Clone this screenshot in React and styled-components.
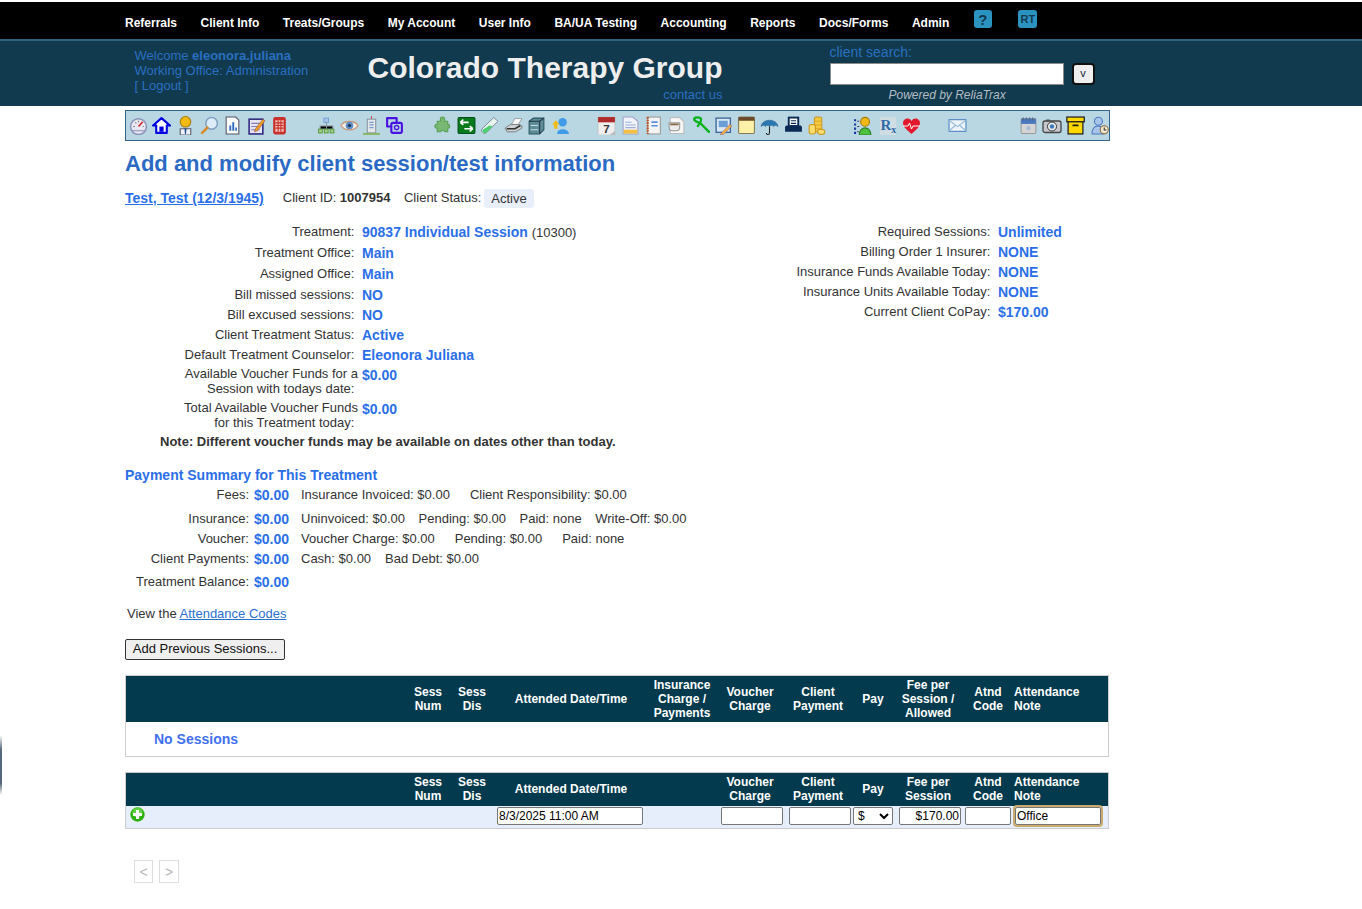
import React from "react";
import styled, { createGlobalStyle } from "styled-components";

const Global = createGlobalStyle`
  html, body { margin: 0; padding: 0; background: #fff; }
  body { font-family: "Liberation Sans", Arial, sans-serif; font-size: 13px; color: #333; }
`;
const Page = styled.div`position: relative; width: 1362px; height: 909px; overflow: hidden; padding-top: 2px; box-sizing: border-box;`;
const EdgeSmudge = styled.div`position: absolute; left: 0; top: 735px; width: 2px; height: 60px; background: linear-gradient(#fff, #56687c 25%, #56687c 80%, #fff);`;

const Nav = styled.nav`height: 37px; background: #000; display: flex; align-items: center; padding-left: 125px; gap: 23.55px; box-sizing: border-box;`;
const NavItem = styled.a`color: #fff; font-weight: 700; font-size: 12px; margin-top: 4px;`;
const HelpBadge = styled.span`
  display: inline-flex; align-items: center; justify-content: center; width: ${p => p.$w}px; height: 18px;
  margin-left: ${p => p.$ml}px; margin-top: -3px; background: #2b93c0; border-radius: 3px; color: #123a4e; font-weight: 700; font-size: ${p => p.$fs}px;
`;

const Header = styled.header`height: 67px; background: #113a4e; border-top: 2px solid #30617f; box-sizing: border-box; display: flex; position: relative;`;
const Welcome = styled.div`margin: 7px 0 0 134.5px; width: 233px; color: #2a6fc0; font-size: 13px; line-height: 15px; b{font-weight:700;}`;
const TitleCol = styled.div`width: 355px; display: flex; flex-direction: column;`;
const Title = styled.h1`margin: 7px 0 0; font-size: 30px; line-height: 40px; color: #eee; font-weight: 700; white-space: nowrap;`;
const Contact = styled.div`margin-top: -1px; text-align: right; color: #2a6fc0; font-size: 13px; line-height: 16px;`;
const SearchCol = styled.div`margin-left: 107px; width: 280px;`;
const SearchLabel = styled.div`color: #2a6fc0; font-size: 14px; line-height: 16px; margin-top: 3px;`;
const SearchRow = styled.div`display: flex; align-items: center; margin-top: 3px;`;
const SearchInput = styled.input`width: 234px; height: 22px; box-sizing: border-box; border: 1px solid #8a8a8a; background: #fff; padding: 0;`;
const SearchBtn = styled.button`
  width: 23px; height: 22px; margin-left: 8px; box-sizing: border-box; padding: 0 0 3px; background: #efefef; border: 2px solid #111; border-radius: 4px;
  font: 11px "Liberation Sans", Arial, sans-serif; color: #123;
`;
const Powered = styled.div`color: #b4bcc2; font-style: italic; font-size: 12px; line-height: 14px; margin: 3px 0 0 59px;`;

const Toolbar = styled.div`
  margin: 4px 0 0 125px; padding-left: .5px; width: 985px; height: 31px; box-sizing: border-box; background: #b9d7e3; border: 1px solid #33658a; display: flex; align-items: center;
`;
const ToolGroup = styled.div`display: flex; margin-left: ${p => p.$ml}px;`;
const ToolSlot = styled.span`width: ${p => p.$w || 23.6}px; height: 20px; display: flex; justify-content: center; align-items: center; svg{display:block;}`;

const Main = styled.main`margin-left: 125px; width: 985px;`;
const Heading = styled.h2`margin: 9px 0 0; color: #2a6ac4; font-size: 22px; line-height: 28px; font-weight: 700;`;
const ClientRow = styled.div`display: flex; align-items: center; margin-top: 10px; height: 20px; line-height: 20px;`;
const ClientLink = styled.a`color: #2a6fe8; font-weight: 700; font-size: 14px; text-decoration: underline; margin-right: 19px;`;
const ClientMeta = styled.span`margin-right: 13.5px; b{font-weight:700;}`;
const Chip = styled.span`background: #e8eefa; border-radius: 3px; padding: 0 7px; margin-left: -10.5px; height: 19px; line-height: 19px;`;

const Details = styled.div`display: flex; margin-top: 14px; position: relative;`;
const LeftDetails = styled.div`width: 620px;`;
const RightDetails = styled.div`width: 365px;`;
const DetailRow = styled.div`display: grid; grid-template-columns: ${p => p.$label}px 1fr; column-gap: 4px; height: ${p => p.$h}px; line-height: 20px;`;
const Label = styled.div`text-align: right; white-space: nowrap; ${p => p.$wrap && "line-height: 14.5px; padding-top: 2px;"}`;
const Value = styled.span`color: #2a6fe8; font-weight: 700; font-size: 14px; white-space: nowrap;`;
const PlainTail = styled.span`color: #333; font-weight: 400; font-size: 13px;`;
const Note = styled.div`font-weight: 700; margin: -1px 0 0 35px; line-height: 20px;`;

const SummaryTitle = styled.div`margin-top: 14px; color: #2a6fe8; font-weight: 700; font-size: 14px; line-height: 19px;`;
const SumRow = styled.div`display: flex; height: ${p => p.$h}px; line-height: 20px;`;
const SumLabel = styled.div`width: 124px; text-align: right; flex: none; white-space: nowrap;`;
const SumValue = styled(Value)`width: 47px; margin-left: 5px; flex: none;`;
const SumParts = styled.div`display: flex; gap: ${p => p.$gap}px; white-space: nowrap;`;

const ViewLine = styled.div`margin: 12px 0 0 2px; line-height: 20px; a{color:#2a6fd0; text-decoration: underline;}`;
const AddBtn = styled.button`
  display: block; margin-top: 15px; width: 160px; height: 21px; padding: 0 0 2px; background: #efefef; border: 1px solid #333; border-radius: 2px;
  font: 13px "Liberation Sans", Arial, sans-serif; color: #111;
`;

const Cols = "280px 44px 44px 154px 68px 68px 68px 42px 68px 52px 94px";
const Table = styled.section`width: 984px; box-sizing: border-box; border: 1px solid #ccc; margin-top: ${p => p.$mt}px;`;
const HeadRow = styled.div`display: grid; grid-template-columns: ${Cols}; height: ${p => p.$h}px; padding-bottom: ${p => p.$pb || 0}px; box-sizing: border-box; background: #033a4d; align-items: center;`;
const HeadCell = styled.div`color: #fff; font-weight: 700; font-size: 12px; line-height: 14px; text-align: ${p => p.$left ? "left" : "center"}; white-space: nowrap;`;
const Empty = styled.div`padding-left: 28px; color: #3f70f0; font-weight: 700; font-size: 14px; height: 34px; line-height: 34px;`;
const FormRow = styled.div`display: grid; grid-template-columns: ${Cols}; height: 22px; background: #e6eefb; align-items: start;`;
const Cell = styled.div`padding-top: 1px; display: flex;`;
const Field = styled.input`
  box-sizing: border-box; width: ${p => p.$w}px; height: 18px; margin-left: ${p => p.$ml}px; padding: 0 1px; border: 1px solid #767676; border-radius: 2px; background: #fff;
  font: 12px "Liberation Sans", Arial, sans-serif; color: #000; text-align: ${p => p.$right ? "right" : "left"};
  outline: ${p => p.$focus ? "2px solid #c9ab6c" : "none"};
`;
const PaySelect = styled.select`
  box-sizing: border-box; width: 40px; height: 18px; margin-left: 1px; padding: 0; border: 1px solid #767676; border-radius: 2px; background: #fff; font: 12px "Liberation Sans", Arial, sans-serif; color: #000;
`;
const AddIcon = styled.span`display: block; margin: 0 0 0 4px; width: 15px; height: 15px;`;
const Pager = styled.div`display: flex; gap: 6px; margin: 31px 0 0 9px;`;
const PageBtn = styled.span`width: ${p => p.$w}px; height: 23px; box-sizing: border-box; border: 1px solid #ddd; color: #b5b5b5; display:flex; align-items:center; justify-content:center; font-size: 14px;`;

const I = ({ children, w = 19, h = 19, vb = "0 0 18 18" }) => <svg width={w} height={h} viewBox={vb}>{children}</svg>;

const icons = {
  gauge: <I><circle cx="9" cy="10" r="7.500" fill="#e8e8f2" stroke="#8a90b8" strokeWidth="1.400"/><path d="M9 10 13 5.500" stroke="#d03030" strokeWidth="1.600"/><path d="M4 10h1.500M13 10h1M6 6l1 1M9 4.500v1.400" stroke="#777" /><path d="M3 14h12" stroke="#8a90b8"/></I>,
  home: <I><path d="M1 9 9 2l8 7h-3v7H4V9Z" fill="#fff" stroke="#0000e0" strokeWidth="2" strokeLinejoin="round"/><rect x="7" y="10" width="4" height="5" fill="#0000e0"/></I>,
  person: <I><path d="M4 18v-6h10v6Z" fill="#eef2f8" stroke="#556"/><path d="M8 11.500h2L9.500 17h-1Z" fill="#25508c"/><circle cx="9" cy="5.500" r="5" fill="#f3bb12" stroke="#a87908"/></I>,
  search: <I><circle cx="11" cy="7" r="5.500" fill="#dcecf8" stroke="#7f9fc0" strokeWidth="1.400"/><path d="M7 11 2 16" stroke="#d88a2c" strokeWidth="2.600" strokeLinecap="round"/></I>,
  report: <I><path d="M3 1h9l3 3v13H3Z" fill="#fbfbfb" stroke="#556"/><path d="M6 14V9h1.800v5ZM8.800 14V6h1.800v8ZM11.600 14v-3h1.600v3Z" fill="#2f6fc0"/></I>,
  notepad: <I><rect x="2" y="3" width="13" height="14" fill="#e8e4f4" stroke="#302a80" strokeWidth="1.500"/><path d="M4 7h8M4 10h8M4 13h8" stroke="#8480b0"/><path d="M8 12 15 3l2 1.500L10 14l-3 1Z" fill="#f0a020" stroke="#844" strokeWidth=".5"/></I>,
  phone: <I><rect x="3" y="1" width="12" height="16.500" rx="2" fill="#c8302c"/><rect x="5" y="4" width="8" height="11" fill="#f0b8b0"/><path d="M5 6.500h8M5 9h8M5 11.500h8M7.700 4v11M10.300 4v11" stroke="#c8302c"/></I>,
  org: <I><rect x="6.500" y="2" width="4.500" height="4" fill="#a8c6ea" stroke="#6a98d0" strokeWidth=".8"/><path d="M9 6v3M3 12V9.500h12V12M9 9v3" stroke="#8a94a0"/><rect x="1.500" y="12.500" width="3.500" height="3.500" fill="#a8d088" stroke="#5a9c40"/><rect x="7" y="12.500" width="3.500" height="3.500" fill="#a8d088" stroke="#5a9c40"/><rect x="12.500" y="12.500" width="3.500" height="3.500" fill="#a8d088" stroke="#5a9c40"/></I>,
  eye: <I><path d="M1 9c3-5 13-5 16 0-3 5.500-13 5.500-16 0Z" fill="#f2f0ec" stroke="#c89878" strokeWidth="1.300"/><circle cx="9" cy="9" r="3.600" fill="#5a8cc8"/><circle cx="9" cy="9" r="1.500" fill="#1e3050"/></I>,
  building: <I><path d="M9 0v3" stroke="#d04040"/><rect x="5" y="3" width="8" height="13" fill="#e4e8ec" stroke="#8a92a0"/><path d="M7 6h4M7 8.500h4M7 11h4" stroke="#7a9ac8" strokeWidth="1.200"/><path d="M1 17h16" stroke="#8ab868" strokeWidth="2"/></I>,
  copy: <I><path d="M2 2h9v8H2Z" fill="none" stroke="#4a12e0" strokeWidth="2" strokeLinejoin="round"/><rect x="6" y="6.500" width="10" height="9.500" rx="1.500" fill="#b9d7e3" stroke="#4a12e0" strokeWidth="2"/><circle cx="11" cy="11" r="2" fill="none" stroke="#4a12e0" strokeWidth="1.300"/></I>,
  puzzle: <I><path d="M7 2.500c0-2 4-2 4 0V5h3v3c2.500-.5 2.500 4 0 3.500V15h-3c.5-2-4-2-3.500 0H4v-3.500c-3 .5-3-4 0-3.500V5h3Z" fill="#79b873" stroke="#55a050" strokeLinejoin="round"/></I>,
  swap: <I><rect x="1" y="1.500" width="16" height="15" rx="1" fill="#087a1c" stroke="#04501c"/><path d="M3 6h8M3 6l3-2.500M3 6l3 2.500M15 12H7M15 12l-3-2.500M15 12l-3 2.500" stroke="#fff" strokeWidth="1.500" fill="none"/></I>,
  tube: <I><path d="M13 1.500 17 5 6 16c-2 2-6-2-4-4Z" fill="#e8f6ee" stroke="#668" strokeWidth=".7"/><path d="M9 9 2.500 13c-1 2 2 4.500 3.500 3L12 9.500Z" fill="#4fd070"/></I>,
  fax: <I><path d="M7 8 10.500 2.500H17L13.500 8Z" fill="#fff" stroke="#888" strokeWidth=".7"/><path d="M1 11.500 6 8h8.500L17 9.500v2L11 15H3Z" fill="#cdd0d4" stroke="#666" strokeWidth=".7"/><path d="M2.500 12h8l5-3" stroke="#333" strokeWidth="1.500" fill="none"/></I>,
  cabinet: <I><path d="M2 5 6 2h10v11l-4 4H2Z" fill="#5c8c98" stroke="#2d5560"/><path d="M12 5v12M2 5h10l4-3" stroke="#234" fill="none"/><path d="M3.500 9h7M3.500 13h7" stroke="#c8dce0"/></I>,
  user: <I><circle cx="11" cy="6" r="4" fill="#3f9ae8"/><path d="M6 17c-1-6 11-6 11 0Z" fill="#3f9ae8"/><path d="M1 8l3.500-4L8 8H6v4H3V8Z" fill="#f3bb12"/></I>,
  cal: <I><rect x="1" y="1" width="16" height="17" fill="#eee" stroke="#bbb" strokeWidth=".6"/><rect x="1" y="1" width="16" height="5" fill="#b02c2c"/><text x="9" y="16" fontFamily="Liberation Sans" fontWeight="700" fontSize="11" textAnchor="middle" fill="#333">7</text><path d="M12 18l5-4v4Z" fill="#bbb"/></I>,
  doc: <I><path d="M2 1h9l5 4v12H2Z" fill="#f2f2fa" stroke="#a0a0c8"/><path d="M4 6h6M4 8.500h10M4 11h10" stroke="#9ab0d8"/><rect x="2.500" y="13" width="13" height="3.600" fill="#f4c040"/></I>,
  spiral: <I><rect x="3.500" y="1" width="12" height="16" fill="#f4f4f4" stroke="#999"/><path d="M3.500 1v16" stroke="#c04a14" strokeWidth="2" strokeDasharray="1.500 1"/><path d="M7 5h6v1.600H7ZM7 8.500h6v1.400H7Z" fill="#5a90d8"/></I>,
  coffee: <I><path d="M3 1.500h9l4 4v11H3Z" fill="#f6f6f6" stroke="#bbb"/><path d="M2 6.500h10v4c0 2.500-1 3.500-3 3.500H5c-2 0-3-1-3-3.500Z" fill="#ececec" stroke="#999"/><path d="M3 8h8" stroke="#8a6a40" strokeWidth="1.600"/></I>,
  ribbon: <I><path d="M17 15 10 8C7 5.500 3 5 3 3 3 .8 9 .8 9.500 3 9.800 5 8.500 7 6.500 9.500" fill="none" stroke="#06b21a" strokeWidth="2.200" strokeLinecap="round"/></I>,
  picture: <I><rect x="2" y="2" width="13.500" height="13.500" fill="#d8e8f4" stroke="#40689c" strokeWidth="1.300"/><rect x="4.500" y="4.500" width="8.500" height="6" fill="#6a9ed4"/><path d="M7 16 15 8l2 1.500-8 8-3 .5Z" fill="#f0b050" stroke="#956" strokeWidth=".5"/></I>,
  note: <I><rect x="1.500" y="1" width="15" height="15.500" rx="1" fill="#fdf0a8" stroke="#857a58"/><rect x="1.500" y="1" width="15" height="3.500" fill="#6a4a2a"/></I>,
  umbrella: <I><path d="M1 10C2 2 16 2 17 10c-1.500-1.500-3-1.500-4 0-1-1.500-3-1.500-4 0-1-1.500-3-1.500-4 0-1-1.500-2.500-1.500-4 0Z" fill="#2a78b0" stroke="#1e5a88" strokeWidth=".5"/><path d="M9 10v6c0 2-3 2-3 0" stroke="#222" fill="none"/></I>,
  printer: <I><rect x="4.500" y="1.500" width="9" height="8" fill="#fff" stroke="#0c2a56" strokeWidth="1.800"/><path d="M6.500 4.500h5M6.500 7h5" stroke="#0c2a56"/><path d="M1 11c0-1.500 1-2 2-2h12c1 0 2 .5 2 2v4H1Z" fill="#0c2a56"/></I>,
  coins: <I><rect x="7" y="1" width="7" height="14" rx="2" fill="#f4c840" stroke="#c89820"/><path d="M7 5h7M7 8.500h7M7 12h7" stroke="#d8a828"/><rect x="2" y="8" width="6" height="9" rx="2" fill="#fadc6c" stroke="#c89820"/><ellipse cx="13.500" cy="15" rx="3.500" ry="2.500" fill="#fadc6c" stroke="#c89820"/></I>,
  people: <I><path d="M1 3v14" stroke="#1638a0" strokeWidth="2" strokeDasharray="2 2"/><path d="M3 5h2M3 10h2M3 15h2" stroke="#446"/><circle cx="10.500" cy="5.500" r="4.200" fill="#f0b818" stroke="#a87908"/><path d="M5 18c0-9 11-9 11 0Z" fill="#50c040" stroke="#2a8028"/></I>,
  rx: <I w={18} h={18} vb="0 0 18 18"><rect x="1" width="16" height="18" fill="#d0dee4"/><text x="1.500" y="13" fontFamily="Liberation Serif" fontWeight="700" fontSize="15" fill="#2f6aa8">R<tspan fontSize="10" dy="3">x</tspan></text></I>,
  heart: <I w={19} h={18} vb="0 0 19 18"><path d="M9.500 17C4 12 1 9.500 1 6c0-5 6.500-6 8.500-2C11.500 0 18 1 18 6c0 3.500-3 6-8.500 11Z" fill="#e2182c"/><path d="M1 9h5l1.500-3 2 6 1.500-3h7" stroke="#fff" fill="none"/></I>,
  mail: <I><rect x="1" y="3.500" width="16" height="11" fill="#eef4fa" stroke="#4a80c0"/><path d="M1 4l8 6 8-6M1 14l6-5M17 14l-6-5" stroke="#90b8dc" fill="none"/></I>,
  calendar2: <I><rect x="2" y="2.500" width="14" height="14" rx="1" fill="#d4d4d4" stroke="#999"/><rect x="2" y="2.500" width="14" height="5" fill="#4a78c0"/><path d="M4 1.500v3M7 1.500v3M10 1.500v3M13 1.500v3" stroke="#567"/><circle cx="9" cy="11.500" r="2" fill="#a8bcd8"/></I>,
  camera: <I w={20} h={18} vb="0 0 20 18"><rect x="1" y="4" width="18" height="11.500" rx="2" fill="#c4c8cc" stroke="#444" strokeWidth="1.300"/><circle cx="10" cy="9.500" r="4.500" fill="#eee" stroke="#333"/><circle cx="10" cy="9.500" r="2.200" fill="#3a7ab8"/><rect x="4" y="2.500" width="4" height="2" fill="#555"/></I>,
  box: <I><rect x=".8" y="1" width="16.500" height="4.500" fill="#ffd800" stroke="#222" strokeWidth="1.200"/><rect x="2" y="5.500" width="14" height="11.500" fill="#ffd800" stroke="#222" strokeWidth="1.200"/><rect x="6" y="8" width="6" height="1.800" rx=".9" fill="#222"/></I>,
  userclock: <I><circle cx="8" cy="5" r="3.800" fill="#a8c4e8" stroke="#4a78c0"/><path d="M2 17c-1-10 12-10 11 0Z" fill="#a8c4e8" stroke="#4a78c0"/><circle cx="13.500" cy="13" r="3.800" fill="#f0e8d0" stroke="#8a6a3a"/><path d="M13.500 11v2.300h2" stroke="#333" fill="none"/></I>,
};

const groups = [
  { ml: 0, items: ["gauge","home","person","search","report","notepad","phone"] },
  { ml: 24, items: ["org","eye","building","copy"], w: 22.500 },
  { ml: 25, items: ["puzzle","swap","tube","fax","cabinet","user"] },
  { ml: 23, items: ["cal","doc","spiral","coffee","ribbon","picture","note","umbrella","printer","coins"], w: 23.300 },
  { ml: 24, items: ["people","rx","heart"] },
  { ml: 23, items: ["mail"] },
  { ml: 47, items: ["calendar2","camera","box","userclock"] },
];

const navItems = ["Referrals","Client Info","Treats/Groups","My Account","User Info","BA/UA Testing","Accounting","Reports","Docs/Forms","Admin"];

const details = [
  { h: 21, label: "Treatment:", value: <>90837 Individual Session <PlainTail>(10300)</PlainTail></> },
  { h: 21, label: "Treatment Office:", value: "Main" },
  { h: 21, label: "Assigned Office:", value: "Main" },
  { h: 20, label: "Bill missed sessions:", value: "NO" },
  { h: 20, label: "Bill excused sessions:", value: "NO" },
  { h: 20, label: "Client Treatment Status:", value: "Active" },
  { h: 20, label: "Default Treatment Counselor:", value: "Eleonora Juliana" },
  { h: 34, wrap: true, label: <>Available Voucher Funds for a<br/>Session with todays date:&nbsp;</>, value: "$0.00" },
  { h: 34, wrap: true, label: <>Total Available Voucher Funds<br/>for this Treatment today:&nbsp;</>, value: "$0.00" },
];
const rightDetails = [
  ["Required Sessions:", "Unlimited"],
  ["Billing Order 1 Insurer:", "NONE"],
  ["Insurance Funds Available Today:", "NONE"],
  ["Insurance Units Available Today:", "NONE"],
  ["Current Client CoPay:", "$170.00"],
];
const summary = [
  { h: 24, gap: 20, label: "Fees:", parts: ["Insurance Invoiced: $0.00", "Client Responsibility: $0.00"] },
  { h: 20, gap: 13.500, label: "Insurance:", parts: ["Uninvoiced: $0.00", "Pending: $0.00", "Paid: none", "Write-Off: $0.00"] },
  { h: 20, gap: 20, label: "Voucher:", parts: ["Voucher Charge: $0.00", "Pending: $0.00", "Paid: none"] },
  { h: 23, gap: 14, label: "Client Payments:", parts: ["Cash: $0.00", "Bad Debt: $0.00"] },
  { h: 20, gap: 20, label: "Treatment Balance:", parts: [] },
];
const head = (ins, fee) => [
  [""], ["Sess","Num"], ["Sess","Dis"], ["Attended Date/Time"], ins, ["Voucher","Charge"], ["Client","Payment"], ["Pay"], fee, ["Atnd","Code"], ["Attendance","Note"],
];
const HeadCells = ({ cols }) => cols.map((lines, i) => (
  <HeadCell key={i} $left={i === 10}>{lines.map((l, j) => <React.Fragment key={j}>{j > 0 && <br/>}{l}</React.Fragment>)}</HeadCell>
));

export default function App() {
  return (
    <Page>
      <Global />
      <EdgeSmudge />
      <Nav>
        {navItems.map(n => <NavItem key={n}>{n}</NavItem>)}
        <HelpBadge $w={18} $ml={1} $fs={15}>?</HelpBadge>
        <HelpBadge $w={19} $ml={3} $fs={11}>RT</HelpBadge>
      </Nav>
      <Header>
        <Welcome>Welcome <b>eleonora.juliana</b><br/>Working Office: Administration<br/>[ Logout ]</Welcome>
        <TitleCol>
          <Title>Colorado Therapy Group</Title>
          <Contact>contact us</Contact>
        </TitleCol>
        <SearchCol>
          <SearchLabel>client search:</SearchLabel>
          <SearchRow><SearchInput /><SearchBtn>v</SearchBtn></SearchRow>
          <Powered>Powered by ReliaTrax</Powered>
        </SearchCol>
      </Header>
      <Toolbar>
        {groups.map((g, i) => (
          <ToolGroup key={i} $ml={g.ml}>
            {g.items.map(k => <ToolSlot key={k} $w={g.w}>{icons[k]}</ToolSlot>)}
          </ToolGroup>
        ))}
      </Toolbar>
      <Main>
        <Heading>Add and modify client session/test information</Heading>
        <ClientRow>
          <ClientLink>Test, Test (12/3/1945)</ClientLink>
          <ClientMeta>Client ID: <b>1007954</b></ClientMeta>
          <ClientMeta>Client Status:</ClientMeta>
          <Chip>Active</Chip>
        </ClientRow>
        <Details>
          <LeftDetails>
            {details.map((d, i) => (
              <DetailRow key={i} $label={233} $h={d.h}>
                <Label $wrap={d.wrap}>{d.label}{!d.wrap && "\u00a0"}</Label>
                <Value>{d.value}</Value>
              </DetailRow>
            ))}
            <Note>Note: Different voucher funds may be available on dates other than today.</Note>
          </LeftDetails>
          <RightDetails>
            {rightDetails.map(([l, v]) => (
              <DetailRow key={l} $label={249} $h={20}>
                <Label>{l}&nbsp;</Label>
                <Value>{v}</Value>
              </DetailRow>
            ))}
          </RightDetails>
        </Details>
        <SummaryTitle>Payment Summary for This Treatment</SummaryTitle>
        {summary.map(s => (
          <SumRow key={s.label} $h={s.h}>
            <SumLabel>{s.label}</SumLabel>
            <SumValue>$0.00</SumValue>
            <SumParts $gap={s.gap}>{s.parts.map(p => <span key={p}>{p}</span>)}</SumParts>
          </SumRow>
        ))}
        <ViewLine>View the <a>Attendance Codes</a></ViewLine>
        <AddBtn>Add Previous Sessions...</AddBtn>
        <Table $mt={15}>
          <HeadRow $h={46}><HeadCells cols={head(["Insurance","Charge /","Payments"], ["Fee per","Session /","Allowed"])} /></HeadRow>
          <Empty>No Sessions</Empty>
        </Table>
        <Table $mt={15}>
          <HeadRow $h={33} $pb={2}><HeadCells cols={head([""], ["Fee per","Session"])} /></HeadRow>
          <FormRow>
            <Cell>
              <AddIcon>
                <svg width="15" height="15" viewBox="0 0 15 15"><circle cx="7.500" cy="7.500" r="7.200" fill="#2fb012"/><circle cx="7.500" cy="5.500" r="5" fill="#5fd040"/><path d="M6 3h3v3h3v3H9v3H6V9H3V6h3Z" fill="#fff"/></svg>
              </AddIcon>
            </Cell>
            <Cell /><Cell />
            <Cell><Field $w={146} $ml={3} defaultValue="8/3/2025 11:00 AM" /></Cell>
            <Cell />
            <Cell><Field $w={62} $ml={5} /></Cell>
            <Cell><Field $w={62} $ml={5} /></Cell>
            <Cell><PaySelect defaultValue="$"><option>$</option></PaySelect></Cell>
            <Cell><Field $w={62} $ml={5} $right defaultValue="$170.00" /></Cell>
            <Cell><Field $w={46} $ml={3} /></Cell>
            <Cell><Field $w={86} $ml={1} $focus defaultValue="Office" /></Cell>
          </FormRow>
        </Table>
        <Pager>
          <PageBtn $w={19}>&lt;</PageBtn>
          <PageBtn $w={20}>&gt;</PageBtn>
        </Pager>
      </Main>
    </Page>
  );
}
